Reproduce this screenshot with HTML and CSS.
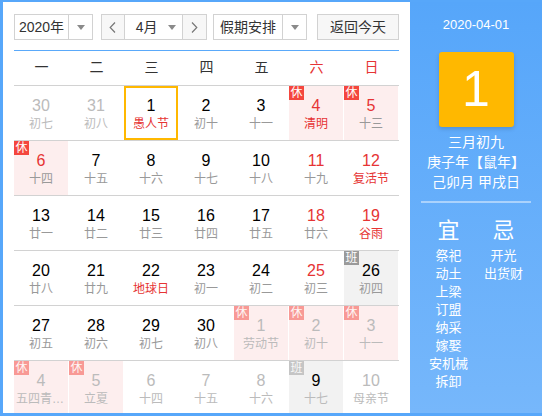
FILE: index.html
```html
<!DOCTYPE HTML>
<html>
<head>
  <title>万年历</title>
  <link rel="stylesheet" href="styles.css">
</head>
<body>
  <div id="calendar">
    <div id="main">
      <div id="toolbar">
        <div class="select year-select">
          <span class="select-text">2020年</span>
          <span class="select-arrow"><i class="caret"></i></span>
        </div>
        <div class="select month-select">
          <span class="step">
            <svg width="7" height="11" viewBox="0 0 7 11"><path d="M6 0.5 L1.2 5.5 L6 10.5" fill="none" stroke="#777" stroke-width="1.2"/></svg>
          </span>
          <span class="month-text">4月<i class="caret"></i></span>
          <span class="step step-next">
            <svg width="7" height="11" viewBox="0 0 7 11"><path d="M1 0.5 L5.8 5.5 L1 10.5" fill="none" stroke="#777" stroke-width="1.2"/></svg>
          </span>
        </div>
        <div class="select holiday-select">
          <span class="select-text">假期安排</span>
          <span class="select-arrow"><i class="caret"></i></span>
        </div>
        <div class="today-btn">返回今天</div>
      </div>

      <div id="weekhead">
        <span>一</span><span>二</span><span>三</span><span>四</span><span>五</span>
        <span class="red">六</span><span class="red">日</span>
      </div>
      <div id="days"></div>
    </div>

    <div id="sidebar">
      <div class="side-date">2020-04-01</div>
      <div class="side-day">1</div>
      <div class="side-info">
        <div>三月初九</div>
        <div>庚子年【鼠年】</div>
        <div>己卯月 甲戌日</div>
      </div>
      <div class="side-line"></div>
      <div class="almanac">
        <div class="almanac-col">
          <div class="almanac-title">宜</div>
          <div>祭祀</div><div>动土</div><div>上梁</div><div>订盟</div>
          <div>纳采</div><div>嫁娶</div><div>安机械</div><div>拆卸</div>
        </div>
        <div class="almanac-col">
          <div class="almanac-title">忌</div>
          <div>开光</div><div>出货财</div>
        </div>
      </div>
    </div>
  </div>

  <script type="text/javascript">
  // o = other month, w = red number, f = festival, r = 休, b = 班, s = selected
  var days = [
    [30, '初七', 'o'], [31, '初八', 'o'], [1, '愚人节', 'fs'], [2, '初十', ''], [3, '十一', ''], [4, '清明', 'wfr'], [5, '十三', 'wr'],
    [6, '十四', 'wr'], [7, '十五', ''], [8, '十六', ''], [9, '十七', ''], [10, '十八', ''], [11, '十九', 'w'], [12, '复活节', 'wf'],
    [13, '廿一', ''], [14, '廿二', ''], [15, '廿三', ''], [16, '廿四', ''], [17, '廿五', ''], [18, '廿六', 'w'], [19, '谷雨', 'wf'],
    [20, '廿八', ''], [21, '廿九', ''], [22, '地球日', 'f'], [23, '初一', ''], [24, '初二', ''], [25, '初三', 'w'], [26, '初四', 'b'],
    [27, '初五', ''], [28, '初六', ''], [29, '初七', ''], [30, '初八', ''], [1, '劳动节', 'or'], [2, '初十', 'or'], [3, '十一', 'or'],
    [4, '五四青年节', 'or'], [5, '立夏', 'or'], [6, '十四', 'o'], [7, '十五', 'o'], [8, '十六', 'o'], [9, '十七', 'ob'], [10, '母亲节', 'o']
  ];

  var flagClass = { o: 'other', w: 'weekend', f: 'fest', r: 'rest', b: 'work', s: 'selected' };
  var box = document.getElementById('days');
  var html = '';

  for (var i = 0; i < days.length; i += 7) {
    html += '<div class="week">';
    days.slice(i, i + 7).forEach(function (d) {
      var cls = d[2].split('').map(function (f) { return flagClass[f]; }).join(' ');
      html += '<div class="day ' + cls + '">';
      if (d[2].indexOf('r') > -1) html += '<span class="badge">休</span>';
      if (d[2].indexOf('b') > -1) html += '<span class="badge">班</span>';
      html += '<div class="num">' + d[0] + '</div>';
      html += '<div class="lunar">' + d[1] + '</div>';
      html += '</div>';
    });
    html += '</div>';
  }
  box.innerHTML = html;
  </script>
</body>
</html>
```

FILE: styles.css
```css
body {
  margin: 0;
  font-family: "Liberation Sans", "Noto Sans CJK SC", sans-serif;
  color: #333;
}
#calendar {
  display: flex;
  width: 542px;
  height: 416px;
  box-sizing: border-box;
  border: 2px solid #57a7fa;
  border-left-width: 3px;
  border-bottom-width: 3px;
  border-right: none;
}

/* left side */
#main {
  width: 407px;
  box-sizing: border-box;
  padding: 12px 11px 0 11px;
  background: #fff;
  overflow: hidden;
}
#toolbar {
  display: flex;
  height: 26px;
}
.select {
  display: flex;
  height: 26px;
  box-sizing: border-box;
  border: 1px solid #d2d2d2;
  font-size: 14px;
  line-height: 24px;
}
.select-text {
  flex: 1;
  text-align: center;
}
.select-arrow {
  width: 23px;
  border-left: 1px solid #d2d2d2;
  text-align: center;
}
.caret {
  display: inline-block;
  width: 0;
  height: 0;
  border-left: 4px solid transparent;
  border-right: 4px solid transparent;
  border-top: 5px solid #8a8a8a;
  vertical-align: middle;
  margin-top: -2px;
}
.year-select {
  width: 79px;
}
.month-select {
  width: 106px;
  margin-left: 8px;
}
.step {
  width: 22px;
  background: #f7f7f7;
  display: flex;
  align-items: center;
  justify-content: center;
}
.step-next {
  width: 23px;
  border-left: 1px solid #d2d2d2;
}
.month-text {
  width: 59px;
  border-left: 1px solid #d2d2d2;
  display: flex;
  justify-content: space-between;
  align-items: center;
  padding: 0 6px 0 11px;
  box-sizing: border-box;
}
.month-text .caret {
  margin-top: 0;
}
.holiday-select {
  width: 94px;
  margin-left: 6px;
}
.today-btn {
  width: 82px;
  height: 26px;
  box-sizing: border-box;
  margin-left: 10px;
  border: 1px solid #d2d2d2;
  background: #f7f7f7;
  font-size: 14px;
  line-height: 24px;
  text-align: center;
}

#weekhead {
  display: grid;
  grid-template-columns: repeat(7, 55px);
  margin-top: 10px;
  border-top: 1px solid #5aa9fa;
  border-bottom: 1px solid #d2d2d2;
  height: 34px;
  line-height: 33px;
  font-size: 14px;
  text-align: center;
}
.red {
  color: #e63434;
}

.week {
  display: grid;
  grid-template-columns: repeat(7, 55px);
  height: 55px;
  box-sizing: border-box;
  border-bottom: 1px solid #d2d2d2;
}
.day {
  position: relative;
  height: 54px;
  box-sizing: border-box;
  padding-top: 10px;
  border-right: 1px solid #fff;
  text-align: center;
}
.num {
  font-size: 16px;
  line-height: 20px;
  color: #000;
}
.lunar {
  font-size: 12px;
  line-height: 16px;
  color: #999;
  padding: 0 2px;
  white-space: nowrap;
  overflow: hidden;
  text-overflow: ellipsis;
}
.weekend .num {
  color: #e63434;
}
.fest .lunar {
  color: #e63434;
}
.rest {
  background: #fdeeee;
}
.work {
  background: #f2f2f2;
}
.other .num,
.other .lunar {
  color: #bbb;
}
.other.work .num {
  color: #000;
}
.selected {
  box-shadow: inset 0 0 0 2px #ffb800;
}
.badge {
  position: absolute;
  top: 0;
  left: 0;
  width: 15px;
  height: 14px;
  font-size: 12px;
  line-height: 14px;
  color: #fff;
  background: #f4463e;
  text-align: center;
}
.work .badge {
  background: #9a9a9a;
}
.other .badge {
  opacity: 0.5;
}

/* right side */
#sidebar {
  flex: 1;
  background: linear-gradient(#56a6fa, #76b7fb);
  color: #fff;
  text-align: center;
  padding-top: 14px;
}
.side-date {
  font-size: 13px;
  line-height: 18px;
}
.side-day {
  width: 75px;
  height: 75px;
  margin: 18px auto 0 auto;
  background: #ffb800;
  border-radius: 3px;
  box-shadow: 0 2px 4px rgba(0, 0, 0, 0.15);
  font-size: 50px;
  line-height: 75px;
}
.side-info {
  margin-top: 5px;
  font-size: 14px;
  line-height: 20px;
}
.side-line {
  width: 110px;
  height: 2px;
  margin: 9px auto 0 auto;
  background: rgba(255, 255, 255, 0.45);
}
.almanac {
  display: flex;
  justify-content: center;
  margin-top: 16px;
}
.almanac-col {
  width: 55px;
  font-size: 13px;
  line-height: 18px;
}
.almanac-title {
  font-size: 22px;
  line-height: 24px;
  margin-bottom: 4px;
}
```
